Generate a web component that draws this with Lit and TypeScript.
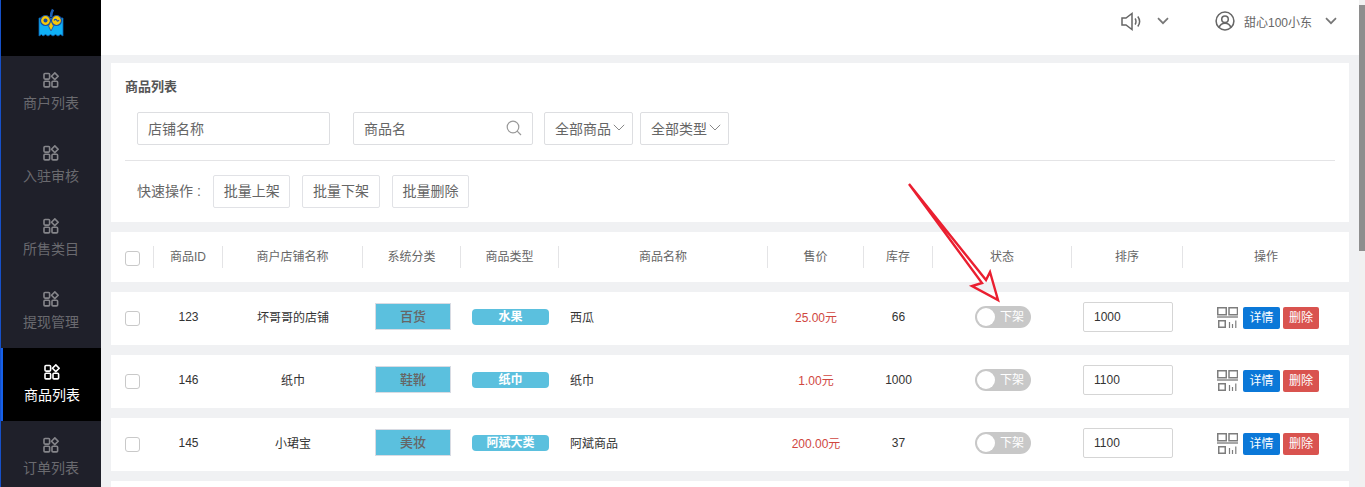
import { LitElement, html, css, svg } from "lit";
import { customElement } from "lit/decorators.js";

const menu = ["商户列表", "入驻审核", "所售类目", "提现管理", "商品列表", "订单列表"];
const heads = ["商品ID", "商户店铺名称", "系统分类", "商品类型", "商品名称", "售价", "库存", "状态", "排序", "操作"];
const rows = [
  { id: "123", shop: "坏哥哥的店铺", sys: "百货", type: "水果", name: "西瓜", price: "25.00元", stock: "66", sort: "1000" },
  { id: "146", shop: "纸巾", sys: "鞋靴", type: "纸巾", name: "纸巾", price: "1.00元", stock: "1000", sort: "1100" },
  { id: "145", shop: "小珺宝", sys: "美妆", type: "阿斌大类", name: "阿斌商品", price: "200.00元", stock: "37", sort: "1100" },
];

const gridIcon = svg`<svg class="mi" viewBox="0 0 16 16" fill="none" stroke="currentColor" stroke-width="1.6">
  <rect x="1" y="1.5" width="5.6" height="5.6" rx="1"/><rect x="1" y="9.3" width="5.6" height="5.6" rx="1"/>
  <rect x="9" y="9.3" width="5.6" height="5.6" rx="1"/><path d="M11.8 .9 15.1 4.2 11.8 7.5 8.5 4.2Z"/></svg>`;

const chevron = svg`<svg class="chev" viewBox="0 0 12 8" fill="none" stroke="currentColor" stroke-width="1.7"><path d="M1 1.2 6 6.2 11 1.2"/></svg>`;
const thinChevron = svg`<svg class="tchev" viewBox="0 0 12 7" fill="none" stroke="currentColor" stroke-width="1"><path d="M.8 .8 6 6 11.2 .8"/></svg>`;

const qr = svg`<svg class="qr" viewBox="0 0 21 21" fill="none" stroke="#7d7d7d">
  <rect x=".75" y=".75" width="8.5" height="7" stroke-width="1.5"/><rect x="12" y=".75" width="8.5" height="7" stroke-width="1.5"/>
  <path d="M0 10H21" stroke-width="2" stroke="#a8a8a8"/>
  <rect x="1.75" y="13.75" width="6.500" height="6.500" stroke-width="1.5"/>
  <path d="M12.500 15V21M15.500 17V21M18.800 13.500V21" stroke-width="1.2"/></svg>`;

@customElement("app-root")
export class AppRoot extends LitElement {
  static styles = css`
    :host { display: block; height: 487px; overflow: hidden; position: relative; font-family: "Liberation Sans", "Noto Sans CJK SC", sans-serif; color: #333; background: #f0f1f3; }
    .layout { display: flex; height: 487px; }
    .side { width: 101px; flex: none; background: #1f202a; border-left: 1px solid #1650c8; box-sizing: border-box; overflow: hidden; }
    .logo { height: 56px; background: #000; display: flex; justify-content: center; align-items: flex-start; padding-top: 8px; box-sizing: border-box; }
    .logo svg { width: 28px; height: 30px; }
    .item { height: 73px; box-sizing: border-box; display: flex; flex-direction: column; align-items: center; padding-top: 16px; color: #6a6a6f; font-size: 14px; line-height: 20px; gap: 5px; }
    .item .mi { width: 16px; height: 16px; color: #85858a; }
    .item.active { background: #000; color: #fff; border-left: 2px solid #1660e8; }
    .item.active .mi { color: #fff; }
    .main { flex: 1; min-width: 0; display: flex; flex-direction: column; }
    .top { height: 55px; background: #fff; flex: none; display: flex; align-items: center; justify-content: flex-end; color: #666; padding: 0 28px 13px 0; box-sizing: border-box; margin-bottom: 8px; }
    .top .speaker { width: 21px; height: 19px; margin-right: 15px; }
    .chev { width: 12px; height: 8px; color: #777; }
    .top .user { width: 20px; height: 20px; margin-left: 46px; margin-right: 9px; }
    .top .name { font-size: 12px; margin-right: 13px; color: #666; }
    .content { margin: 0 16px 0 10px; display: flex; flex-direction: column; gap: 10px; }
    .panel { background: #fff; height: 159px; box-sizing: border-box; padding: 17px 14px 0; }
    .title { font-size: 13px; font-weight: bold; color: #555; line-height: 14px; }
    .filters { display: flex; margin-top: 18px; padding: 0 0 15px 12px; border-bottom: 1px solid #e4e4e6; gap: 11px; }
    .inp { height: 33px; box-sizing: border-box; border: 1px solid #dddee1; border-radius: 2px; font-size: 14px; color: #666; display: flex; align-items: center; padding: 0 10px 2px; }
    .filters .i1 { width: 193px; margin-right: 12px; }
    .filters .i2 { width: 180px; justify-content: space-between; padding-right: 10px; }
    .filters .sel { gap: 2px; padding: 0 7px 2px 10px; }
    .filters .sel + .sel { margin-left: -4px; }
    .search { width: 16px; height: 16px; color: #999; }
    .tchev { width: 12px; height: 7px; color: #888; }
    .quick { display: flex; align-items: center; padding: 14px 0 0 12px; font-size: 14px; color: #666; gap: 12px; }
    .quick span { width: 64px; white-space: nowrap; margin-bottom: 3px; }
    .btn { height: 33px; width: 77.4px; box-sizing: border-box; border: 1px solid #e1e2e6; border-radius: 2px; font-size: 14px; color: #666; display: flex; align-items: center; justify-content: center; padding: 0 0 3px; }
    .grid { display: grid; grid-template-columns: 42px 69px 140px 98px 98px 209px 96px 69px 139px 111px 1fr; background: #fff; align-items: center; }
    .head { height: 50px; font-size: 12px; color: #666; }
    .head .cb { margin-top: 2px; }
    .head .c { border-left: 1px solid #e4e4e6; height: 22px; line-height: 22px; text-align: center; }
    .grid.row { grid-template-columns: 43px 69px 140px 98px 98px 209px 96px 69px 139px 111px 1fr; height: 53px; box-sizing: border-box; padding-bottom: 4px; font-size: 12px; color: #333; }
    .row > div { text-align: center; }
    .row .cb { margin-top: 4px; }
    .cb { width: 15px; height: 15px; box-sizing: border-box; border: 1px solid #c9c9c9; border-radius: 3px; margin-left: 14px; }
    .sysb { width: 76px; height: 27px; box-sizing: border-box; margin-left: 12px; background: #5bc0de; border: 1px solid #d8dbe3; color: #666; font-size: 13px; font-weight: 500; line-height: 25px; text-align: center; }
    .typeb { width: 77px; height: 16px; margin-left: 11px; background: #5bc0de; border-radius: 4px; color: #fff; font-size: 12px; font-weight: bold; line-height: 16px; text-align: center; }
    .row > .nm { text-align: left; padding-left: 11px; }
    .row > .pr { color: #d0473f; }
    .sw { width: 56px; height: 22px; box-sizing: border-box; margin-left: 42px; background: #c8c8c8; border-radius: 11px; position: relative; color: #fff; font-size: 12px; line-height: 22px; padding-left: 25px; text-align: left; }
    .sw::before { content: ""; position: absolute; left: 2px; top: 2px; width: 18px; height: 18px; border-radius: 50%; background: #fff; }
    .sort { width: 90px; height: 30px; box-sizing: border-box; margin-left: 11px; border: 1px solid #d5d5d5; border-radius: 2px; text-align: left; padding-left: 10px; line-height: 28px; font-size: 12px; color: #333; }
    .ops { display: flex; align-items: center; padding-left: 34px; margin-top: 2px; }
    .qr { width: 21px; height: 21px; margin-right: 5px; }
    .ob { width: 37px; height: 22px; border-radius: 2px; color: #fff; font-size: 12px; line-height: 22px; text-align: center; margin-right: 3px; }
    .ob.blue { background: #0b78d8; }
    .ob.red { width: 36px; background: #d9534f; }
    .sb { position: absolute; right: 0; top: 0; width: 6px; height: 487px; background: #f1f1f1; }
    .sb i { display: block; margin-top: 5px; height: 246px; background: #8e8e8e; }
    .arrow { position: absolute; left: 900px; top: 175px; width: 110px; height: 135px; pointer-events: none; }
  `;

  render() {
    return html`<div class="layout">
        <nav class="side">
          <div class="logo">
            <svg viewBox="0 0 28 30">
              <path d="M14 9C14 5 14.500 4 16 1.500" stroke="#1a5fb4" stroke-width="2.500" fill="none"/>
              <path d="M2 10H26V28L23.500 26.500 21 28 18.500 26.500 16 28 13.500 26.500 11 28 8.500 26.500 6 28 4.500 26.500 2 28Z" fill="#0fb0f5" stroke="#0a5fb0" stroke-width=".8"/>
              <circle cx="8.500" cy="12.500" r="5" fill="#f8c808" stroke="#174ea6" stroke-width="1.200"/>
              <circle cx="19.500" cy="12.500" r="5" fill="#f8c808" stroke="#174ea6" stroke-width="1.200"/>
              <circle cx="8.500" cy="12.500" r="2" fill="#174ea6"/>
              <path d="M17 12.500C18 11 19 11 20 12.500 20.500 13.500 21.500 13 22 12" fill="none" stroke="#174ea6" stroke-width="1.200"/>
              <path d="M14 13 16.500 18 14 23 11.500 18Z" fill="#f8c808" stroke="#174ea6" stroke-width=".8"/>
            </svg>
          </div>
          ${menu.map((m, i) => html`<div class="item ${i === 4 ? "active" : ""}">${gridIcon}<span>${m}</span></div>`)}
        </nav>
        <div class="main">
          <header class="top">
            <svg class="speaker" viewBox="0 0 21 19" fill="none" stroke="#666" stroke-width="1.500">
              <path d="M1 6H5L11 1.500V17.500L5 13H1Z"/><path d="M14 6.500C15.300 8 15.300 11 14 12.500M16.800 4.500C19 7.500 19 11.500 16.800 14.500"/>
            </svg>
            ${chevron}
            <svg class="user" viewBox="0 0 22 22" fill="none" stroke="#666" stroke-width="1.700">
              <circle cx="11" cy="11" r="9.800"/><circle cx="11" cy="9" r="3.600"/><path d="M4.500 18.300C5.500 15 8 13.500 11 13.500S16.500 15 17.500 18.300"/>
            </svg>
            <span class="name">甜心100小东</span>
            ${chevron}
          </header>
          <div class="content">
            <section class="panel">
              <div class="title">商品列表</div>
              <div class="filters">
                <div class="inp i1">店铺名称</div>
                <div class="inp i2">商品名
                  <svg class="search" viewBox="0 0 16 16" fill="none" stroke="currentColor" stroke-width="1.200"><circle cx="7" cy="7" r="5.800"/><path d="M11.200 11.200 15 15"/></svg>
                </div>
                <div class="inp sel">全部商品${thinChevron}</div>
                <div class="inp sel">全部类型${thinChevron}</div>
              </div>
              <div class="quick">
                <span>快速操作 :</span>
                <div class="btn">批量上架</div>
                <div class="btn">批量下架</div>
                <div class="btn">批量删除</div>
              </div>
            </section>
            <div class="grid head">
              <div><div class="cb"></div></div>
              ${heads.map((h) => html`<div class="c">${h}</div>`)}
            </div>
            ${rows.map((r) => html`<div class="grid row">
                <div><div class="cb"></div></div>
                <div>${r.id}</div>
                <div>${r.shop}</div>
                <div><div class="sysb">${r.sys}</div></div>
                <div><div class="typeb">${r.type}</div></div>
                <div class="nm">${r.name}</div>
                <div class="pr">${r.price}</div>
                <div>${r.stock}</div>
                <div><div class="sw">下架</div></div>
                <div><div class="sort">${r.sort}</div></div>
                <div class="ops">${qr}<div class="ob blue">详情</div><div class="ob red">删除</div></div>
              </div>`)}
            <div class="grid row"></div>
          </div>
        </div>
      </div>
      <div class="sb"><i></i></div>
      <svg class="arrow" viewBox="900 175 110 135" fill="none" stroke="#ea1f30" stroke-width="2.400" stroke-linejoin="miter">
        <path d="M909 184 986 280 990 272 998 300 972 286 982 283Z"/>
      </svg>`;
  }
}
